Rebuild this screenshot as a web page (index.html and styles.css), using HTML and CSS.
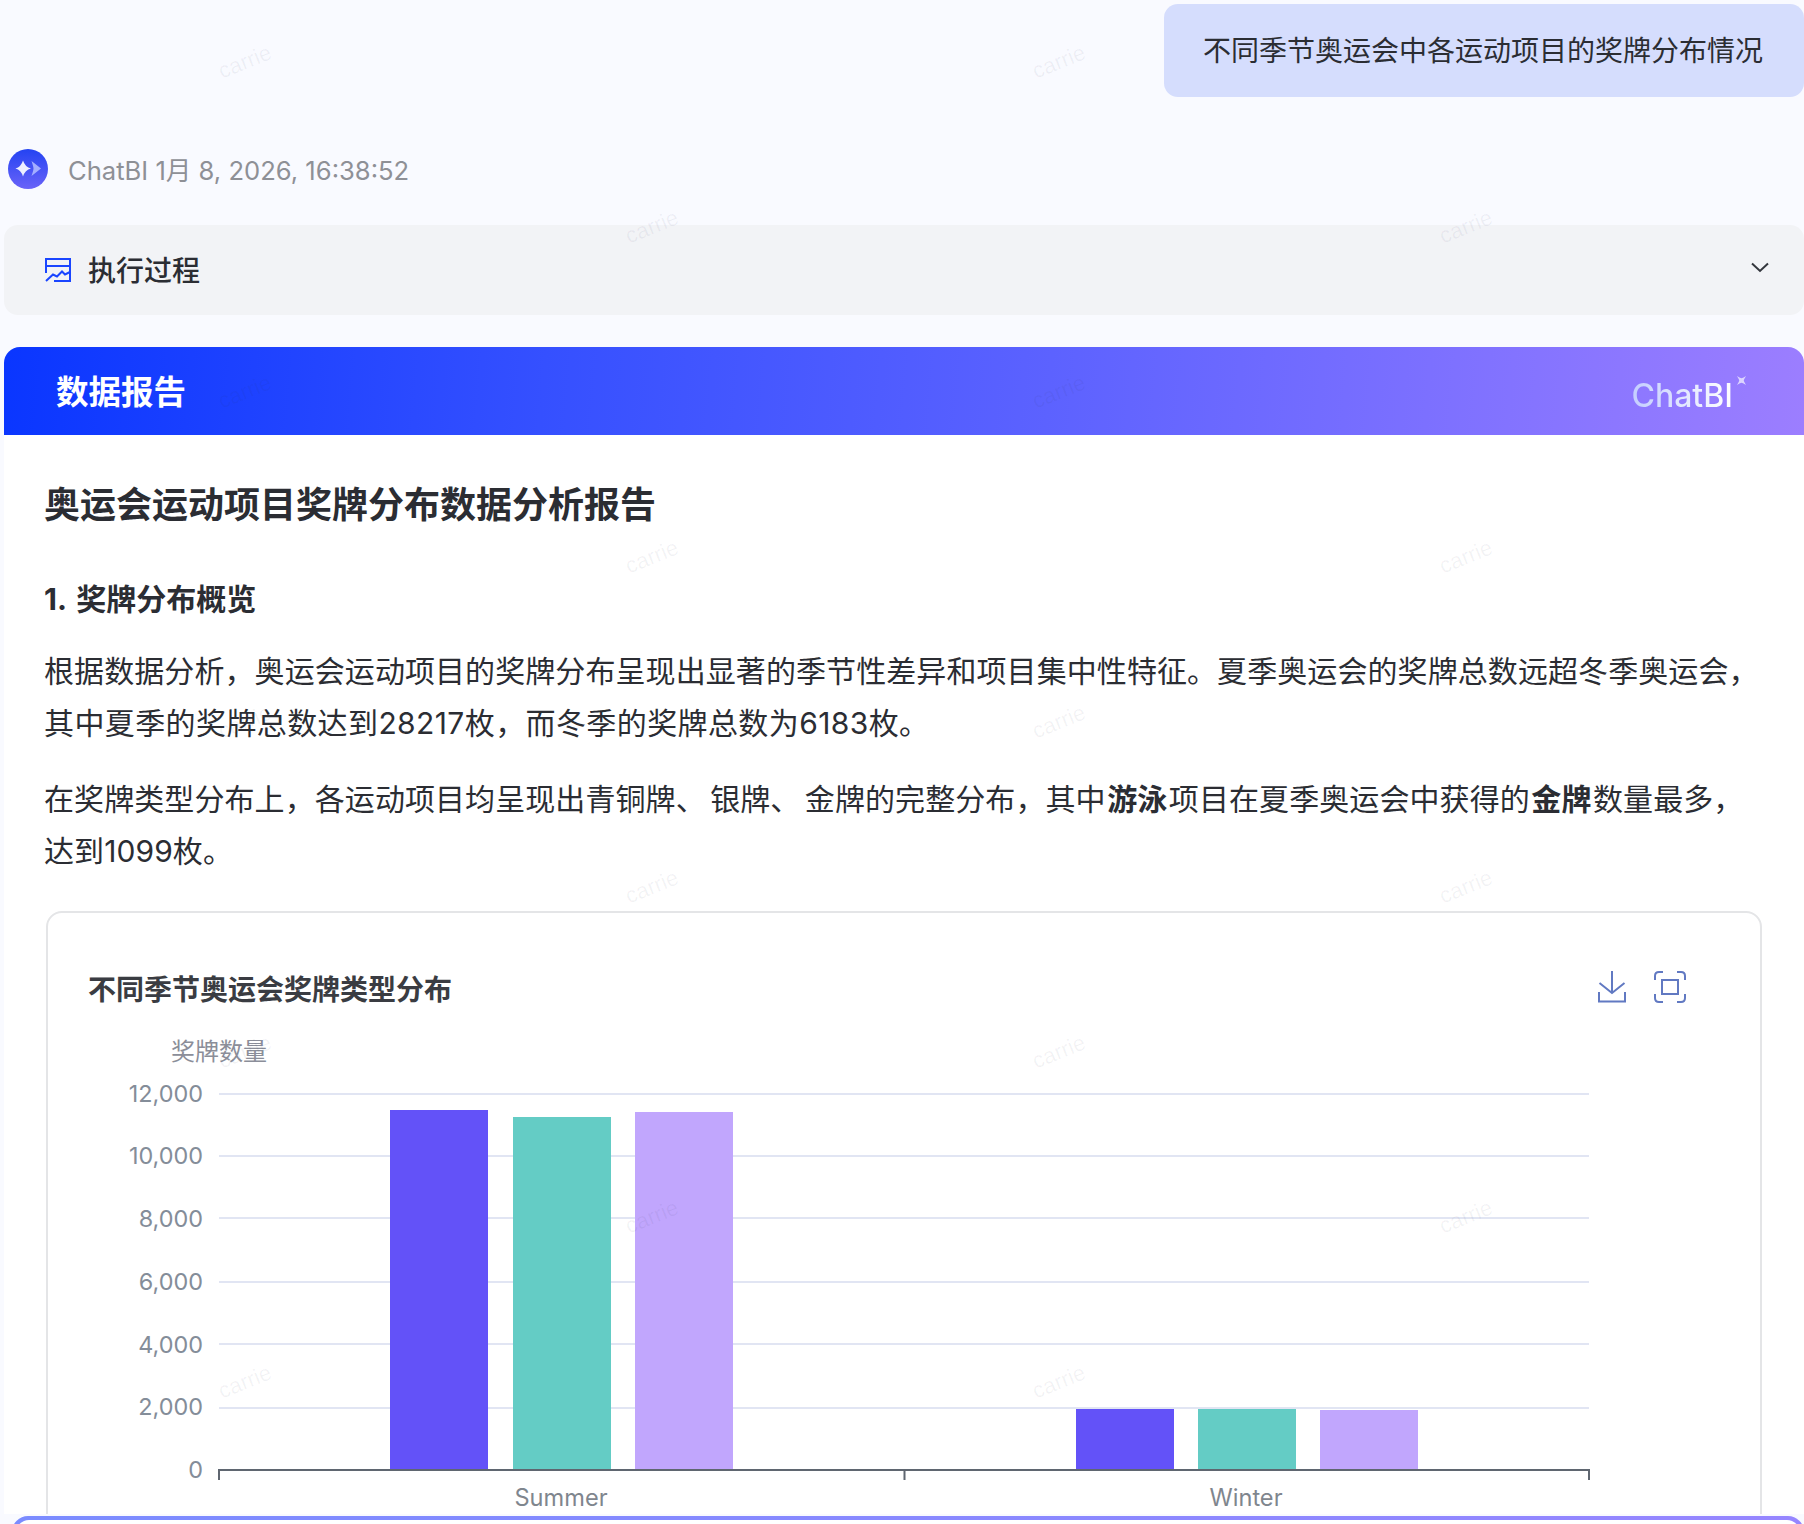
FILE: index.html
```html
<!DOCTYPE html>
<html lang="zh-CN">
<head>
<meta charset="utf-8">
<title>ChatBI</title>
<link rel="stylesheet" href="styles.css">
</head>
<body>
<main class="page">
  <div class="question-row">
    <div class="bubble">不同季节奥运会中各运动项目的奖牌分布情况</div>
  </div>

  <div class="meta">
    <svg class="avatar" viewBox="0 0 40 40" aria-hidden="true">
      <defs>
        <linearGradient id="av" x1="0" y1="0" x2="0" y2="1">
          <stop offset="0" stop-color="#2443f2"/>
          <stop offset="1" stop-color="#6a63f8"/>
        </linearGradient>
      </defs>
      <circle cx="20" cy="20" r="20" fill="url(#av)"/>
      <path d="M15 11.500 Q17 18 23 19.500 Q17 21 15 27.500 Q13 21 7.500 19.500 Q13 18 15 11.500Z" fill="#eef0ff"/>
      <path d="M23.500 12 L33 19.500 L23.500 27 Q25.500 21 25.500 19.500 Q25.500 18 23.500 12Z" fill="#a4aeff"/>
    </svg>
    <span class="meta-text">ChatBI 1月 8, 2026, 16:38:52</span>
  </div>

  <div class="process">
    <svg class="process-icon" viewBox="0 0 26 24" aria-hidden="true">
      <path d="M1 15V1H25V23H9 M1 8H25" fill="none" stroke="#1a45ff" stroke-width="2"/>
      <path d="M1 23 L8 16.500 L12 18.500 L17 13.500 L20 16.500 L25 14" fill="none" stroke="#1a45ff" stroke-width="2"/>
    </svg>
    <span class="process-label">执行过程</span>
    <svg class="chevron" viewBox="0 0 18 11" aria-hidden="true">
      <path d="M1 1.500 L9 9 L17 1.500" fill="none" stroke="#33363d" stroke-width="2"/>
    </svg>
  </div>

  <section class="report">
    <header class="report-head">
      <span class="report-name">数据报告</span>
      <span class="brand">ChatBI<svg class="brand-star" viewBox="0 0 10 10" aria-hidden="true"><path d="M0 0 Q4 2.500 5 2.500 Q6 2.500 10 0 Q7.500 4 7.500 5 Q7.500 6 10 10 Q6 7.500 5 7.500 Q4 7.500 0 10 Q2.500 6 2.500 5 Q2.500 4 0 0Z" fill="#dcd4ff"/></svg></span>
    </header>

    <div class="report-body">
      <h1>奥运会运动项目奖牌分布数据分析报告</h1>
      <h2>1. 奖牌分布概览</h2>
      <p>根据数据分析，奥运会运动项目的奖牌分布呈现出显著的季节性差异和项目集中性特征。夏季奥运会的奖牌总数远超冬季奥运会，<br><span class="loose">其中夏季的奖牌总数达到28217枚，而冬季的奖牌总数为6183枚。</span></p>
      <p>在奖牌类型分布上，各运动项目均呈现出青铜牌<span class="dun">、</span>银牌<span class="dun">、</span>金牌的完整分布，其中<strong>游泳</strong>项目在夏季奥运会中获得的<strong>金牌</strong>数量最多，<br>达到1099枚。</p>

      <div class="chart-card">
        <div class="chart-head">
          <span class="chart-title">不同季节奥运会奖牌类型分布</span>
          <div class="chart-tools">
            <svg class="tool-download" viewBox="0 0 28 32" aria-hidden="true">
              <path d="M14 0V22 M1.500 12 L14 22 L26.500 12 M1 21V30.500H27V21" fill="none" stroke="#6179c2" stroke-width="2"/>
            </svg>
            <svg class="tool-full" viewBox="0 0 32 32" aria-hidden="true">
              <path d="M9 1H5Q1 1 1 5V9 M23 1H27Q31 1 31 5V9 M1 23V27Q1 31 5 31H9 M31 23V27Q31 31 27 31H23" fill="none" stroke="#6179c2" stroke-width="2"/>
              <rect x="8" y="9" width="16" height="14" fill="none" stroke="#6179c2" stroke-width="2"/>
            </svg>
          </div>
        </div>
        <svg class="chart" viewBox="48 1030 1712 484" aria-label="不同季节奥运会奖牌类型分布">
          <text class="axis-name" x="171" y="1060">奖牌数量</text>
          <g class="grid">
            <path d="M219 1094H1589"/>
            <path d="M219 1156H1589"/>
            <path d="M219 1218H1589"/>
            <path d="M219 1282H1589"/>
            <path d="M219 1344H1589"/>
            <path d="M219 1408H1589"/>
          </g>
          <g class="ylabels">
            <text x="203" y="1102">12,000</text>
            <text x="203" y="1164">10,000</text>
            <text x="203" y="1227">8,000</text>
            <text x="203" y="1290">6,000</text>
            <text x="203" y="1353">4,000</text>
            <text x="203" y="1415">2,000</text>
            <text x="203" y="1478">0</text>
          </g>
          <rect class="bar-a" x="390" y="1110" width="98" height="360"/>
          <rect class="bar-b" x="513" y="1117" width="98" height="353"/>
          <rect class="bar-c" x="635" y="1112" width="98" height="358"/>
          <rect class="bar-a" x="1076" y="1409" width="98" height="61"/>
          <rect class="bar-b" x="1198" y="1409" width="98" height="61"/>
          <rect class="bar-c" x="1320" y="1410" width="98" height="60"/>
          <path class="axis" d="M219 1480V1470H1589V1480 M904.500 1470V1480"/>
          <g class="xlabels">
            <text x="561" y="1506">Summer</text>
            <text x="1246" y="1506">Winter</text>
          </g>
        </svg>
      </div>
    </div>
  </section>
</main>

<div class="composer"><div class="composer-frame"><div class="composer-inner"></div></div></div>

<div class="watermarks" aria-hidden="true">
  <div class="wm-row"><span>carrie</span><span>carrie</span></div>
  <div class="wm-row wm-odd"><span>carrie</span><span>carrie</span></div>
  <div class="wm-row"><span>carrie</span><span>carrie</span></div>
  <div class="wm-row wm-odd"><span>carrie</span><span>carrie</span></div>
  <div class="wm-row"><span>carrie</span><span>carrie</span></div>
  <div class="wm-row wm-odd"><span>carrie</span><span>carrie</span></div>
  <div class="wm-row"><span>carrie</span><span>carrie</span></div>
  <div class="wm-row wm-odd"><span>carrie</span><span>carrie</span></div>
  <div class="wm-row"><span>carrie</span><span>carrie</span></div>
</div>
</body>
</html>
```
FILE: styles.css
```css
* { box-sizing: border-box; }
html, body {
  margin: 0;
  height: 1524px;
  overflow: hidden;
  background: #f9faff;
}
body {
  position: relative;
  font-family: Inter, "Noto Sans CJK SC", sans-serif;
  color: #2b2d33;
}
.page {
  display: flex;
  flex-direction: column;
  padding: 4px 0 0 4px;
}
.question-row {
  display: flex;
  justify-content: flex-end;
}
.bubble {
  height: 93px;
  padding: 0 41px 3px 39px;
  display: flex;
  align-items: center;
  background: #d5ddfd;
  border-radius: 14px;
  font-size: 28px;
  color: #2b2d33;
}
.meta {
  display: flex;
  align-items: center;
  gap: 20px;
  margin: 52px 0 0 4px;
  height: 40px;
}
.avatar { width: 40px; height: 40px; flex: none; }
.meta-text {
  font-size: 25.6px;
  line-height: 38px;
  margin-top: 3px;
  color: #8e9096;
}
.process {
  display: flex;
  align-items: center;
  height: 90px;
  margin-top: 36px;
  padding: 0 35px 0 41px;
  background: #f2f3f6;
  border-radius: 14px;
}
.process-icon { width: 26px; height: 24px; flex: none; }
.process-label {
  margin-left: 17px;
  margin-top: -2px;
  font-size: 28px;
  font-weight: 500;
  color: #2b2d33;
}
.chevron { width: 18px; height: 11px; margin-left: auto; margin-top: -5px; }
.report { margin-top: 32px; }
.report-head {
  display: flex;
  align-items: center;
  justify-content: space-between;
  height: 88px;
  padding: 0 71px 0 52px;
  background: linear-gradient(95deg, #0a36ff 0%, #3550ff 30%, #5c62ff 58%, #9c7eff 100%);
  border-radius: 16px 16px 0 0;
}
.report-name {
  font-size: 32.5px;
  font-weight: 700;
  line-height: 44px;
  margin-top: 4px;
  color: #fff;
}
.brand {
  position: relative;
  font-size: 32px;
  font-weight: 500;
  line-height: 40px;
  margin-top: 9px;
  color: transparent;
  background: linear-gradient(90deg, #c3cdff, #ffffff);
  -webkit-background-clip: text;
  background-clip: text;
}
.brand-star {
  position: absolute;
  left: 106px;
  top: 0;
  width: 9px;
  height: 9px;
}
.report-body {
  height: 1079px;
  padding: 45px 41px 0 40px;
  background: #fff;
}
h1 {
  margin: 0;
  font-size: 36px;
  line-height: 50px;
  font-weight: 700;
  color: #2b2d33;
}
h2 {
  margin: 49px 0 26px;
  font-size: 30px;
  line-height: 40px;
  font-weight: 700;
  word-spacing: 3px;
  color: #2b2d33;
}
p {
  margin: 0 0 24px;
  font-size: 30px;
  line-height: 52px;
  letter-spacing: 0.08px;
  color: #2b2d33;
}
strong { font-weight: 700; margin: 0 1.5px; }
.loose { letter-spacing: 0.4px; }
.dun { letter-spacing: 4.5px; }
.chart-card {
  margin: 34px 0 0 2px;
  width: 1716px;
  height: 640px;
  padding-top: 55px;
  border: 2px solid #e4e5e7;
  border-radius: 16px;
}
.chart-head {
  display: flex;
  justify-content: space-between;
  align-items: flex-start;
  height: 44px;
  padding: 0 74px 0 40px;
  margin-bottom: 18px;
}
.chart-title {
  font-size: 28px;
  line-height: 44px;
  font-weight: 700;
  color: #3a3c42;
}
.chart-tools {
  display: flex;
  gap: 28px;
  padding-top: 3px;
}
.tool-download { width: 28px; height: 32px; }
.tool-full { width: 32px; height: 32px; }
.chart {
  display: block;
  width: 1712px;
  height: 484px;
}
.chart text { font-family: Inter, "Noto Sans CJK SC", sans-serif; }
.axis-name { font-size: 24px; fill: #8b8e99; }
.grid path { stroke: #e1e5f3; stroke-width: 2; fill: none; }
.ylabels text { font-size: 23.4px; fill: #848d99; text-anchor: end; }
.xlabels text { font-size: 23.6px; fill: #7f868e; text-anchor: middle; }
.axis { stroke: #5f6670; stroke-width: 2; fill: none; }
.bar-a { fill: #6352f8; }
.bar-b { fill: #64ccc5; }
.bar-c { fill: #c1a6fd; }
.composer {
  position: absolute;
  left: 0;
  right: 0;
  top: 1514px;
  height: 10px;
  overflow: hidden;
  padding: 2px 0 0 12px;
  background: #f9faff;
}
.composer-frame {
  height: 40px;
  padding: 4px 4px 0;
  border-radius: 16px 16px 0 0;
  background: linear-gradient(90deg, #7b8cff, #9686ff);
}
.composer-inner {
  height: 40px;
  border-radius: 13px 13px 0 0;
  background: #fff;
}
.watermarks {
  position: absolute;
  left: 0;
  top: 0;
  width: 100%;
  pointer-events: none;
}
.wm-row {
  display: flex;
  gap: 754px;
  height: 165px;
  padding: 47px 0 0 215px;
}
.wm-odd { padding-left: 622px; }
.wm-row span {
  flex: none;
  width: 60px;
  height: 30px;
  line-height: 30px;
  text-align: center;
  font-family: "Liberation Sans", sans-serif;
  font-size: 22px;
  color: rgba(40, 50, 90, 0.06);
  transform: rotate(-22deg);
}
```
